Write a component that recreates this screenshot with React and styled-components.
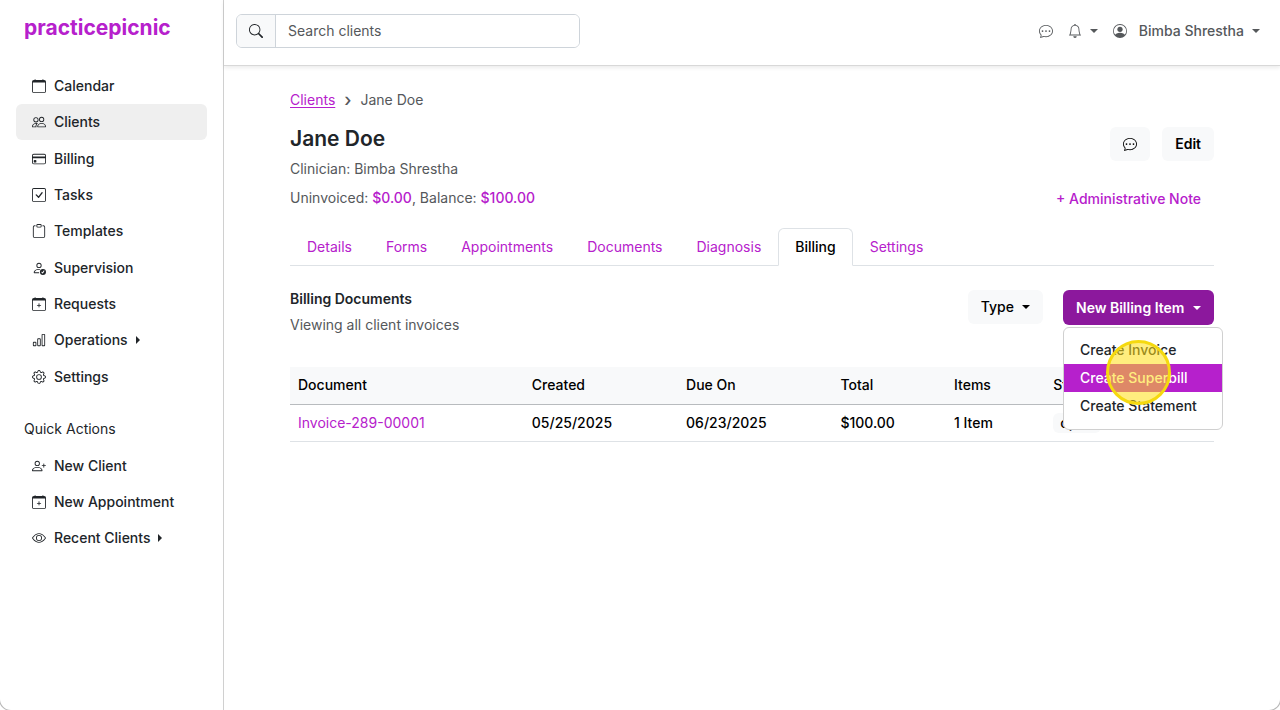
import React, { useState } from 'react'
import styled, { createGlobalStyle, ThemeProvider } from 'styled-components'
import {
	BsBarChart,
	BsBell,
	BsCalendar,
	BsCalendarPlus,
	BsChatDots,
	BsCheckSquare,
	BsClipboard,
	BsCreditCard,
	BsEye,
	BsGear,
	BsPeople,
	BsPersonCheck,
	BsPersonCircle,
	BsPersonPlus,
	BsSearch,
} from 'react-icons/bs'

const theme = {
	primary: '#b620cc',
	primaryDark: '#8c189d',
	text: '#212529',
	black: '#000',
	muted: '#55585b',
	light: '#f8f9fa',
	active: '#efefef',
	border: '#dee2e6',
	white: '#fff',
}

const GlobalStyle = createGlobalStyle`
	* {
		box-sizing: border-box;
	}

	html {
		background: #fff;
	}

	body {
		margin: 0;
		font-family: Inter, 'Liberation Sans', sans-serif;
		font-size: 14px;
		font-weight: 500;
		line-height: 20px;
		color: ${theme.text};
	}

	button,
	input {
		font: inherit;
	}

	a {
		text-decoration: none;
	}
`

const Page = styled.div`
	display: flex;
	min-height: 100vh;
	background: ${(props) => props.theme.white};
	border-radius: 0 0 11px 11px;
	box-shadow: 0 0 0 1px #b8b8b8;
	overflow: hidden;
`

const Sidebar = styled.aside`
	width: 224px;
	flex-shrink: 0;
	padding: 12px 16px;
	border-right: 1px solid #d0d0d0;
`

const Brand = styled.a`
	display: block;
	padding: 0 8px;
	font-size: 21px;
	font-weight: 700;
	line-height: 32px;
	color: ${(props) => props.theme.primary};
`

const NavList = styled.ul`
	display: grid;
	grid-auto-rows: 1fr;
	min-height: ${(props) => props.$height};
	margin: ${(props) => props.$margin};
	padding: 0;
	list-style: none;
`

const NavLink = styled.a`
	display: flex;
	align-items: center;
	gap: 8px;
	height: 36px;
	padding: 0 16px;
	border-radius: 6px;
	color: ${(props) => props.theme.text};
	background: ${(props) => (props.$active ? props.theme.active : 'transparent')};
`

const SideTitle = styled.h2`
	margin: 24px 8px 0;
	font-size: 14px;
	font-weight: 400;
	line-height: 20px;
`

const CaretRight = styled.span`
	border-top: 4px solid transparent;
	border-bottom: 4px solid transparent;
	border-left: 4px solid currentColor;
`

const CaretDown = styled.span`
	border-left: 4px solid transparent;
	border-right: 4px solid transparent;
	border-top: 4px solid currentColor;
`

const Main = styled.div`
	flex: 1;
	min-width: 0;
`

const TopBar = styled.header`
	display: flex;
	align-items: center;
	justify-content: space-between;
	height: 66px;
	padding: 0 20px 4px 12px;
	border-bottom: 1px solid #d8d8d8;
	box-shadow: 0 2px 4px rgba(0, 0, 0, 0.08);
`

const SearchGroup = styled.form`
	display: flex;
	width: 344px;
	height: 34px;
	border: 1px solid #ced4da;
	border-radius: 6px;
	overflow: hidden;
`

const SearchButton = styled.button`
	display: flex;
	align-items: center;
	justify-content: center;
	width: 39px;
	border: 0;
	border-right: 1px solid #ced4da;
	background: ${(props) => props.theme.light};
	color: ${(props) => props.theme.text};
`

const SearchInput = styled.input`
	flex: 1;
	min-width: 0;
	padding: 0 12px;
	border: 0;
	outline: 0;
	font-weight: 400;

	&::placeholder {
		color: ${(props) => props.theme.muted};
		opacity: 1;
	}
`

const TopActions = styled.div`
	display: flex;
	align-items: center;
	gap: 15px;
`

const TopButton = styled.button`
	display: flex;
	align-items: center;
	gap: 8px;
	padding: 0;
	border: 0;
	background: none;
	color: ${(props) => props.theme.muted};
`

const UserName = styled.span`
	margin-left: 4px;
`

const Content = styled.main`
	padding: 24px 66px;
`

const Breadcrumb = styled.nav`
	display: flex;
	align-items: center;
	gap: 9px;
	font-weight: 400;
	color: ${(props) => props.theme.muted};

	a {
		color: ${(props) => props.theme.primary};
		text-decoration: underline;
		text-underline-offset: 2px;
	}
`

const Separator = styled.span`
	font-size: 18px;
	font-weight: 500;
`

const ClientHeader = styled.div`
	display: flex;
	justify-content: space-between;
	margin-top: 12px;
`

const ClientName = styled.h1`
	margin: 4px 0 7px;
	font-size: 21px;
	font-weight: 600;
	line-height: 26px;
`

const InfoLine = styled.p`
	margin: 0 0 9px;
	font-weight: 400;
	color: ${(props) => props.theme.muted};

	a {
		font-weight: 500;
		color: ${(props) => props.theme.primary};
	}
`

const HeaderSide = styled.div`
	display: flex;
	flex-direction: column;
	align-items: flex-end;
	gap: 28px;
	padding-top: 5px;
`

const ButtonRow = styled.div`
	display: flex;
	gap: ${(props) => props.$gap};
`

const Button = styled.button`
	display: flex;
	align-items: center;
	justify-content: space-between;
	gap: 8px;
	min-width: ${(props) => (props.$primary ? '151px' : '0')};
	height: ${(props) => (props.$primary ? '35px' : '34px')};
	padding: 0 13px;
	border: 0;
	border-radius: 6px;
	font-weight: ${(props) => (props.$light ? 500 : 600)};
	white-space: nowrap;
	color: ${(props) => (props.$primary ? props.theme.white : props.theme.black)};
	background: ${(props) =>
		props.$primary ? props.theme.primaryDark : props.theme.light};
`

const NoteLink = styled.a`
	padding-right: 13px;
	color: ${(props) => props.theme.primary};
`

const Tabs = styled.ul`
	display: flex;
	margin: 11px 0 0;
	padding: 0;
	list-style: none;
	border-bottom: 1px solid ${(props) => props.theme.border};
`

const Tab = styled.a`
	display: block;
	height: 38px;
	margin-bottom: -1px;
	padding: 8px 16px;
	border: 1px solid transparent;
	border-radius: 6px 6px 0 0;
	font-weight: 400;
	color: ${(props) => props.theme.primary};

	${(props) =>
		props.$active &&
		`
		color: #000;
		font-weight: 500;
		background: #fff;
		border-color: #dee2e6 #dee2e6 #fff;
	`}
`

const BillingHeader = styled.div`
	display: flex;
	justify-content: space-between;
	margin-top: 24px;
`

const BillingTitle = styled.h2`
	margin: 0 0 7px;
	font-size: 14px;
	font-weight: 600;
	line-height: 18px;
`

const BillingText = styled.p`
	margin: 0;
	font-weight: 400;
	color: ${(props) => props.theme.muted};
`

const Dropdown = styled.div`
	position: relative;
`

const Menu = styled.ul`
	position: absolute;
	top: 37px;
	left: 0;
	z-index: 2;
	width: 160px;
	margin: 0;
	padding: 8px 0 9px;
	list-style: none;
	background: ${(props) => props.theme.white};
	border: 1px solid #d0d0d0;
	border-radius: 6px;
`

const MenuItem = styled.button`
	display: block;
	width: 100%;
	height: 28px;
	padding: 0 16px;
	border: 0;
	text-align: left;
	white-space: nowrap;
	color: ${(props) => (props.$active ? props.theme.white : props.theme.text)};
	background: ${(props) => (props.$active ? props.theme.primary : 'none')};
`

const ClickMarker = styled.span`
	position: absolute;
	top: 50px;
	left: 43px;
	z-index: 3;
	width: 65px;
	height: 65px;
	border: 3px solid #f5d90f;
	border-radius: 50%;
	background: rgba(255, 222, 20, 0.55);
	pointer-events: none;
`

const Table = styled.table`
	width: 100%;
	margin-top: 32px;
	table-layout: fixed;
	border-collapse: collapse;
	color: ${(props) => props.theme.black};

	th,
	td {
		height: 37px;
		padding: 0 8px;
		text-align: left;
		font-weight: 500;
	}

	th {
		background: ${(props) => props.theme.light};
		border-bottom: 1px solid #b8bbbe;
	}

	td {
		border-bottom: 1px solid ${(props) => props.theme.border};
	}

	th:last-child,
	td:last-child {
		padding-left: 0;
	}

	a {
		font-weight: 400;
		color: ${(props) => props.theme.primary};
	}
`

const Badge = styled.span`
	display: inline-block;
	padding: 0 7px;
	border-radius: 6px;
	background: ${(props) => props.theme.light};
`

const mainLinks = [
	{ label: 'Calendar', icon: BsCalendar },
	{ label: 'Clients', icon: BsPeople, active: true },
	{ label: 'Billing', icon: BsCreditCard },
	{ label: 'Tasks', icon: BsCheckSquare },
	{ label: 'Templates', icon: BsClipboard },
	{ label: 'Supervision', icon: BsPersonCheck },
	{ label: 'Requests', icon: BsCalendarPlus },
	{ label: 'Operations', icon: BsBarChart, more: true },
	{ label: 'Settings', icon: BsGear },
]

const quickLinks = [
	{ label: 'New Client', icon: BsPersonPlus },
	{ label: 'New Appointment', icon: BsCalendarPlus },
	{ label: 'Recent Clients', icon: BsEye, more: true },
]

const tabs = [
	'Details',
	'Forms',
	'Appointments',
	'Documents',
	'Diagnosis',
	'Billing',
	'Settings',
]

const columns = [
	{ label: 'Document', width: '25.3%' },
	{ label: 'Created', width: '16.7%' },
	{ label: 'Due On', width: '16.7%' },
	{ label: 'Total', width: '12.3%' },
	{ label: 'Items', width: '11.6%' },
	{ label: 'Status', width: '17.4%' },
]

const menuItems = ['Create Invoice', 'Create Superbill', 'Create Statement']

const Nav = ({ links, height, margin }) => (
	<NavList $height={height} $margin={margin}>
		{links.map(({ label, icon: Icon, active, more }) => (
			<li key={label}>
				<NavLink href="#" $active={active}>
					<Icon size={14} />
					{label}
					{more && <CaretRight />}
				</NavLink>
			</li>
		))}
	</NavList>
)

const App = () => {
	const [activeTab, setActiveTab] = useState('Billing')
	const [open, setOpen] = useState(true)

	return (
		<ThemeProvider theme={theme}>
			<GlobalStyle />
			<Page>
				<Sidebar>
					<Brand href="#">practicepicnic</Brand>
					<Nav links={mainLinks} height="327px" margin="24px 0 0" />
					<SideTitle>Quick Actions</SideTitle>
					<Nav links={quickLinks} height="108px" margin="9px 0 0" />
				</Sidebar>
				<Main>
					<TopBar>
						<SearchGroup onSubmit={(e) => e.preventDefault()}>
							<SearchButton type="submit" aria-label="Search">
								<BsSearch size={14} />
							</SearchButton>
							<SearchInput
								type="text"
								aria-label="Search clients"
								placeholder="Search clients"
							/>
						</SearchGroup>
						<TopActions>
							<TopButton aria-label="Messages">
								<BsChatDots size={14} />
							</TopButton>
							<TopButton aria-label="Notifications">
								<BsBell size={14} />
								<CaretDown />
							</TopButton>
							<TopButton>
								<BsPersonCircle size={14} />
								<UserName>Bimba Shrestha</UserName>
								<CaretDown />
							</TopButton>
						</TopActions>
					</TopBar>
					<Content>
						<Breadcrumb aria-label="Breadcrumb">
							<a href="#">Clients</a>
							<Separator>›</Separator>
							<span>Jane Doe</span>
						</Breadcrumb>
						<ClientHeader>
							<div>
								<ClientName>Jane Doe</ClientName>
								<InfoLine>Clinician: Bimba Shrestha</InfoLine>
								<InfoLine>
									Uninvoiced: <a href="#">$0.00</a>, Balance:{' '}
									<a href="#">$100.00</a>
								</InfoLine>
							</div>
							<HeaderSide>
								<ButtonRow $gap="12px">
									<Button aria-label="Message client">
										<BsChatDots size={14} />
									</Button>
									<Button>Edit</Button>
								</ButtonRow>
								<NoteLink href="#">+ Administrative Note</NoteLink>
							</HeaderSide>
						</ClientHeader>
						<Tabs>
							{tabs.map((tab) => (
								<li key={tab}>
									<Tab
										href="#"
										$active={tab === activeTab}
										onClick={() => setActiveTab(tab)}
									>
										{tab}
									</Tab>
								</li>
							))}
						</Tabs>
						<BillingHeader>
							<div>
								<BillingTitle>Billing Documents</BillingTitle>
								<BillingText>Viewing all client invoices</BillingText>
							</div>
							<ButtonRow $gap="20px">
								<Button $light>
									Type
									<CaretDown />
								</Button>
								<Dropdown>
									<Button $primary onClick={() => setOpen(!open)}>
										New Billing Item
										<CaretDown />
									</Button>
									{open && (
										<>
											<Menu>
												{menuItems.map((item) => (
													<li key={item}>
														<MenuItem $active={item === 'Create Superbill'}>
															{item}
														</MenuItem>
													</li>
												))}
											</Menu>
											<ClickMarker />
										</>
									)}
								</Dropdown>
							</ButtonRow>
						</BillingHeader>
						<Table>
							<colgroup>
								{columns.map(({ label, width }) => (
									<col key={label} width={width} />
								))}
							</colgroup>
							<thead>
								<tr>
									{columns.map(({ label }) => (
										<th key={label}>{label}</th>
									))}
								</tr>
							</thead>
							<tbody>
								<tr>
									<td>
										<a href="#">Invoice-289-00001</a>
									</td>
									<td>05/25/2025</td>
									<td>06/23/2025</td>
									<td>$100.00</td>
									<td>1 Item</td>
									<td>
										<Badge>open</Badge>
									</td>
								</tr>
							</tbody>
						</Table>
					</Content>
				</Main>
			</Page>
		</ThemeProvider>
	)
}

export default App
